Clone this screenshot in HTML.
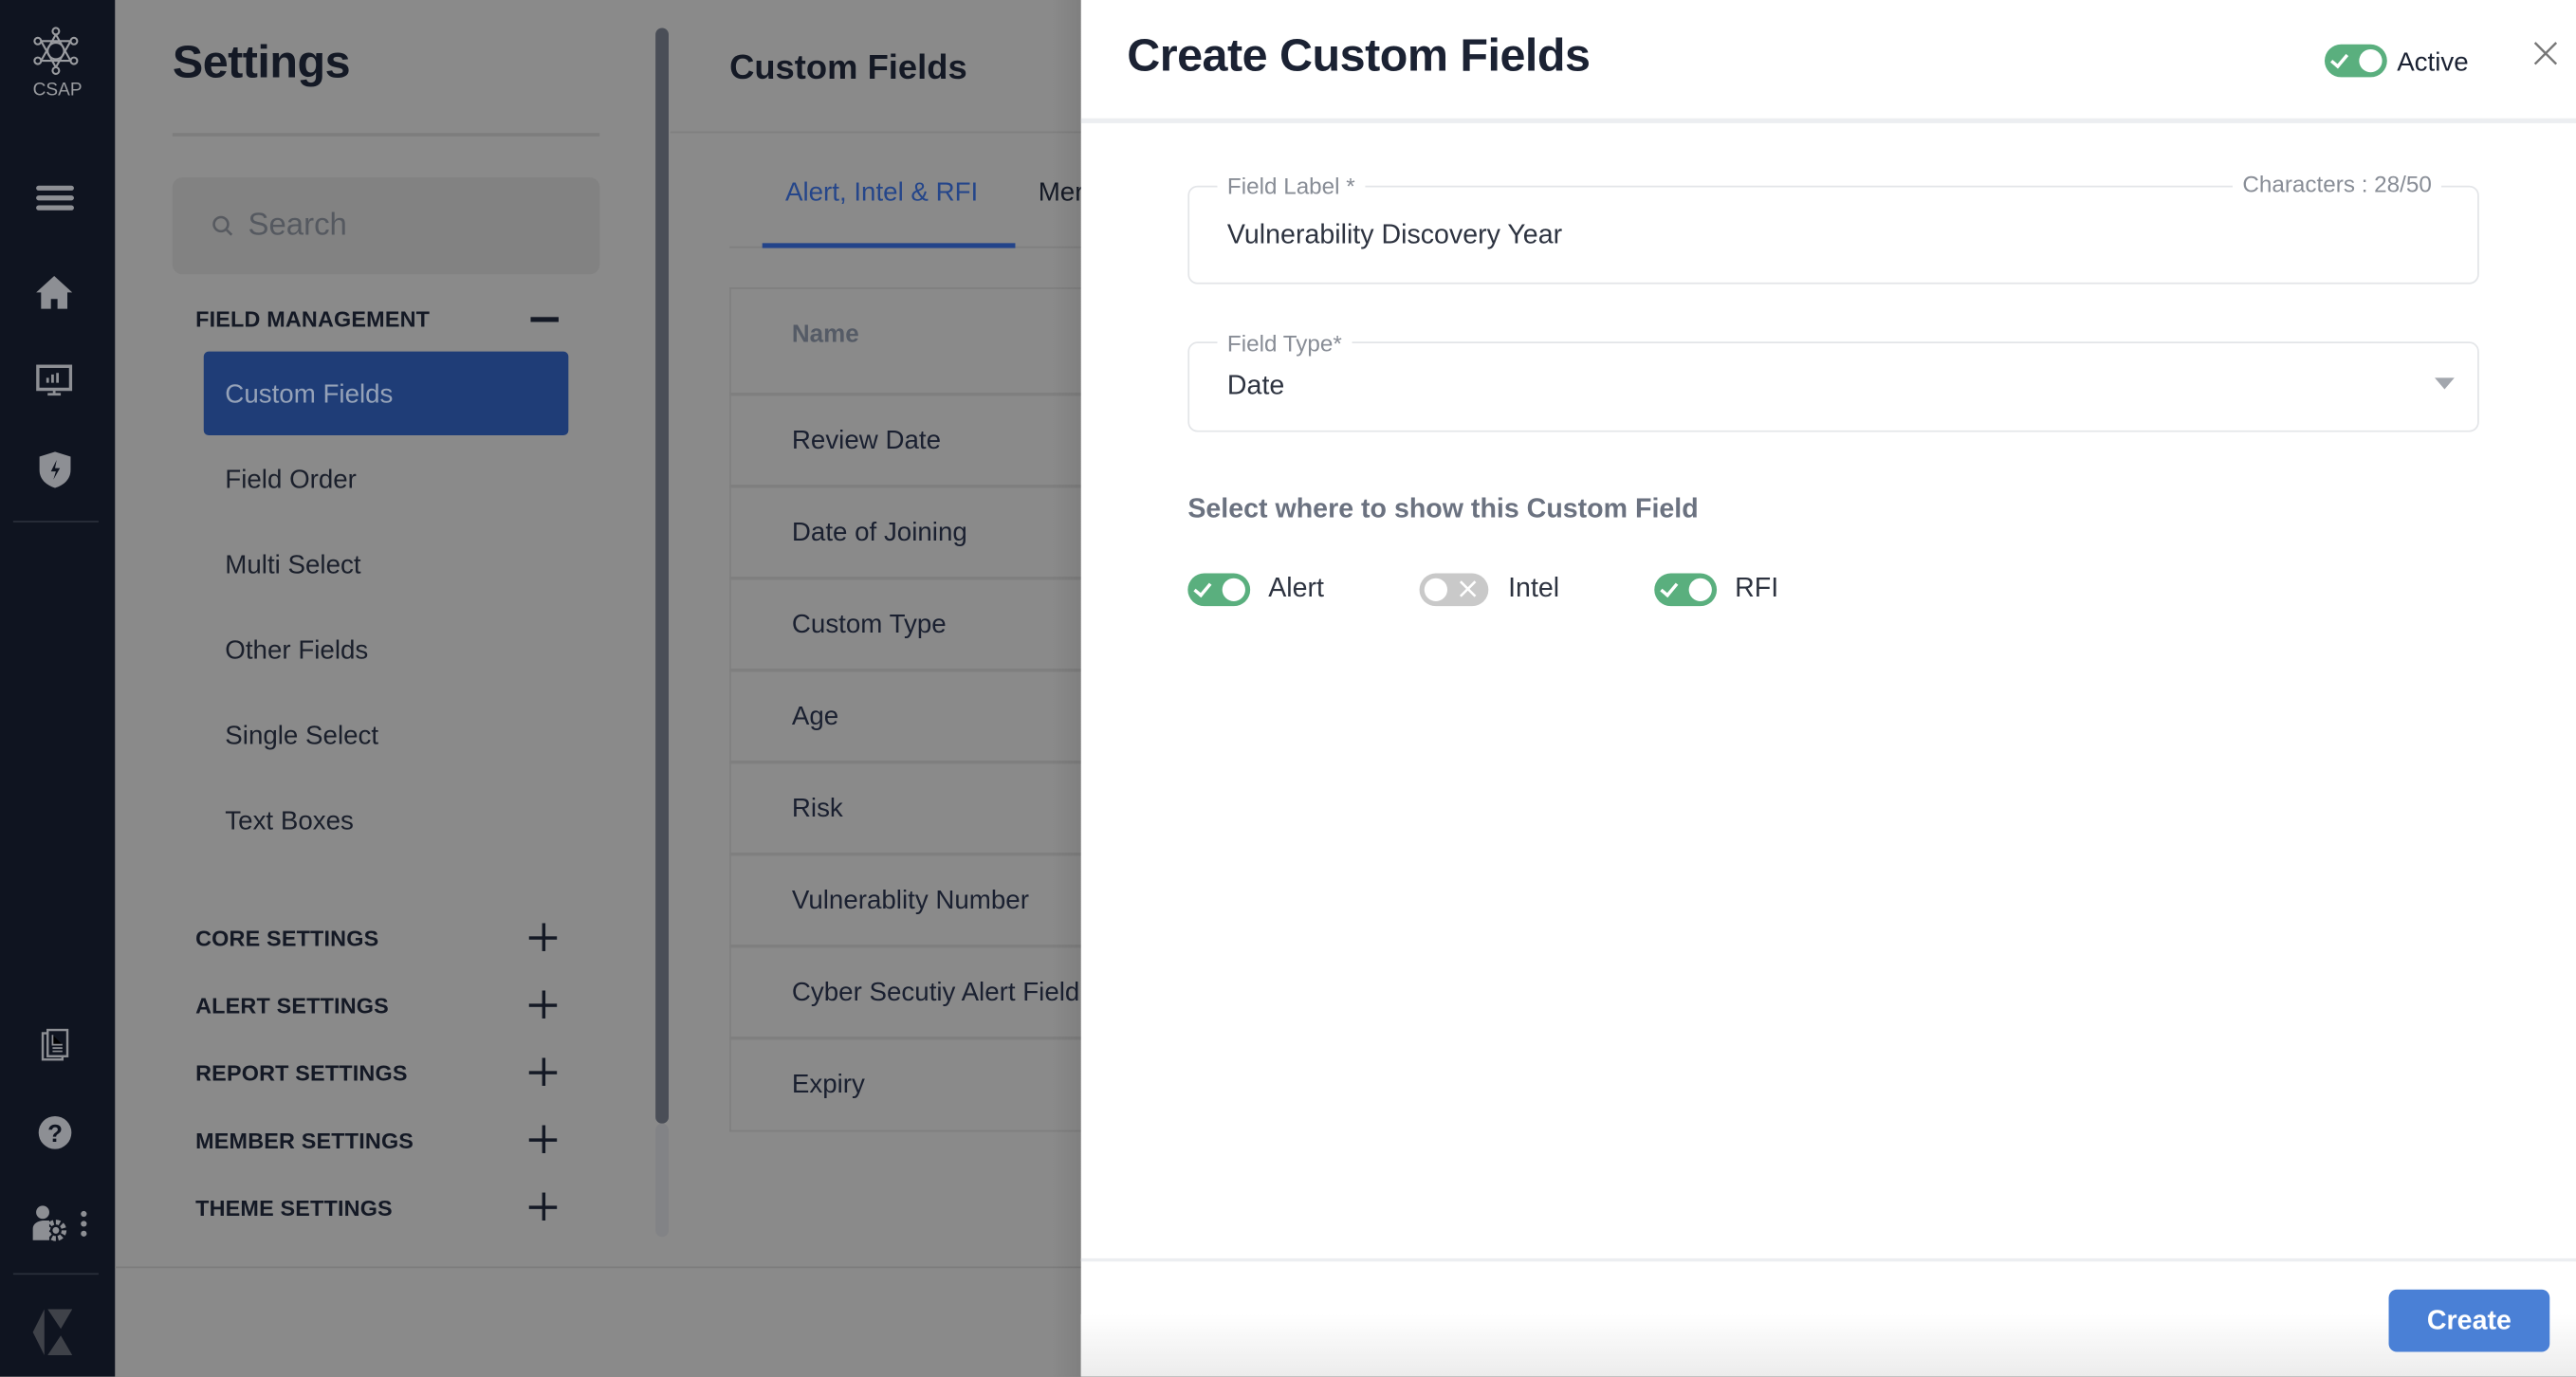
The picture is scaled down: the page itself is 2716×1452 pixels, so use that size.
<!DOCTYPE html>
<html><head><meta charset="utf-8"><style>
*{margin:0;padding:0;box-sizing:border-box}
html,body{width:2716px;height:1450px;overflow:hidden;background:#8a8a8a}
#w{position:absolute;left:0;top:0;width:1568px;height:837.2px;transform:scale(1.73214);transform-origin:0 0;font-family:"Liberation Sans",sans-serif;background:#8a8a8a}
.a{position:absolute;white-space:nowrap}
.side{left:0;top:0;width:70px;height:838px;background:#0f1420}
.ic{fill:#8d8f94}
.nav{font-size:16px;color:#1a1f2b;left:137px}
.sec{font-size:13.5px;font-weight:bold;color:#141925;left:119px;letter-spacing:.1px}
.plus{left:322px;width:18px;height:18px}
.plus:before{content:"";position:absolute;left:0;top:8px;width:17px;height:2px;background:#141925}
.plus:after{content:"";position:absolute;left:7.5px;top:0;width:2px;height:17px;background:#141925}
.row{left:482px;font-size:16px;color:#1a2030}
.sep{left:444px;width:214px;height:2px;background:#7f7f7f}
.tg{width:38px;height:20px;border-radius:10px;background:#5aaf7e}
.tg:after{content:"";position:absolute;right:3px;top:3px;width:14px;height:14px;border-radius:50%;background:#fff}
.tg i{position:absolute;left:6px;top:4px;width:6px;height:10px;border:solid #fff;border-width:0 2px 2px 0;transform:rotate(40deg)}
.off{background:#c9c9c9;width:42px}
.off:after{display:none}
.box{left:723px;width:786px;border:1.5px solid #e3e5e8;border-radius:6px}
.lab{font-size:14px;color:#888d96;background:#fff;padding:0 6px}
</style></head><body><div id="w">
<div class="a side"></div>
<svg class="a" style="left:19px;top:15px" width="30" height="32" viewBox="0 0 30 32"><g fill="none" stroke="#9a9ca0" stroke-width="1.2"><circle cx="15" cy="16" r="5"/><circle cx="15" cy="4" r="2"/><circle cx="15" cy="28" r="2"/><circle cx="4" cy="10" r="2"/><circle cx="26" cy="10" r="2"/><circle cx="4" cy="22" r="2"/><circle cx="26" cy="22" r="2"/><path d="M15 6L6 22M15 6L24 22M15 26L6 10M15 26L24 10M6 10H24M6 22H24"/></g></svg>
<div class="a" style="left:20px;top:49px;font-size:11px;color:#9a9ca0">CSAP</div>
<div class="a" style="left:22px;top:113px;width:23px;height:3px;border-radius:2px;background:#8d8f94;box-shadow:0 6px 0 #8d8f94,0 12px 0 #8d8f94"></div>
<svg class="a" style="left:22px;top:167px" width="22" height="22" viewBox="0 0 22 22"><path class="ic" d="M11 1L0 11h3v10h6v-6h4v6h6V11h3z"/></svg>
<svg class="a" style="left:22px;top:222px" width="22" height="20" viewBox="0 0 22 20"><rect x="1" y="1" width="20" height="14" fill="none" stroke="#8d8f94" stroke-width="2"/><path d="M7 11V8M10 11V6M13 11V5M11 15v3M7 18h8" stroke="#8d8f94" stroke-width="1.6"/></svg>
<svg class="a" style="left:24px;top:275px" width="19" height="22" viewBox="0 0 19 22"><path class="ic" d="M9.5 0L19 3v8c0 6-4.5 9.5-9.5 11C4.5 20.5 0 17 0 11V3z"/><path d="M10.5 5L7 12h3l-1.5 5 4-7h-3z" fill="#0f1420"/></svg>
<div class="a" style="left:8px;top:317px;width:52px;height:1px;background:#2a2f3a"></div>
<svg class="a" style="left:25px;top:626px" width="17" height="20" viewBox="0 0 17 20"><rect x="1" y="3" width="12" height="16" fill="none" stroke="#8d8f94" stroke-width="1.4"/><rect x="4" y="1" width="12" height="16" fill="#0f1420" stroke="#8d8f94" stroke-width="1.4"/><path d="M7 12h6M7 14h6M7 4v6h6" stroke="#8d8f94" stroke-width="1"/></svg>
<svg class="a" style="left:23px;top:679px" width="21" height="21" viewBox="0 0 21 21"><circle class="ic" cx="10.5" cy="10.5" r="10"/><text x="10.5" y="16" font-size="15" font-weight="bold" text-anchor="middle" fill="#0f1420" font-family="Liberation Sans">?</text></svg>
<svg class="a" style="left:19px;top:733px" width="38" height="24" viewBox="0 0 38 24"><circle class="ic" cx="7" cy="5" r="4"/><path class="ic" d="M1 22v-7c0-3 3-5 7-5h3v12z"/><circle cx="15" cy="16" r="5" fill="none" stroke="#8d8f94" stroke-width="3" stroke-dasharray="2.5 1.4"/><circle cx="15" cy="16" r="2" fill="#8d8f94"/><circle cx="32" cy="6" r="1.8" fill="#8d8f94"/><circle cx="32" cy="12" r="1.8" fill="#8d8f94"/><circle cx="32" cy="18" r="1.8" fill="#8d8f94"/></svg>
<div class="a" style="left:8px;top:775px;width:52px;height:1px;background:#2a2f3a"></div>
<svg class="a" style="left:19px;top:797px" width="28" height="28" viewBox="0 0 28 28"><path d="M8 0L1 14l7 14zM10 0h15l-7 12zM10 28h15l-7-12z" fill="#3f4249"/></svg>

<div class="a" style="left:105px;top:22px;font-size:28px;font-weight:bold;color:#141925;letter-spacing:-.3px">Settings</div>
<div class="a" style="left:105px;top:81px;width:260px;height:2px;background:#7d7d7d"></div>
<div class="a" style="left:105px;top:108px;width:260px;height:59px;border-radius:6px;background:#828282"></div>
<svg class="a" style="left:129px;top:131px" width="13" height="13" viewBox="0 0 13 13"><circle cx="5.5" cy="5.5" r="4.3" fill="none" stroke="#575a60" stroke-width="1.5"/><path d="M9 9l3 3" stroke="#575a60" stroke-width="1.5"/></svg>
<div class="a" style="left:151px;top:127px;font-size:19px;color:#555960">Search</div>
<div class="a sec" style="top:187px">FIELD MANAGEMENT</div>
<div class="a" style="left:323px;top:193px;width:17px;height:2.5px;background:#141925"></div>
<div class="a" style="left:124px;top:214px;width:222px;height:51px;border-radius:3px;background:#1f3d77"></div>
<div class="a nav" style="top:232px;color:#95a2b8">Custom Fields</div>
<div class="a nav" style="top:284px">Field Order</div>
<div class="a nav" style="top:336px">Multi Select</div>
<div class="a nav" style="top:388px">Other Fields</div>
<div class="a nav" style="top:440px">Single Select</div>
<div class="a nav" style="top:492px">Text Boxes</div>
<div class="a sec" style="top:564px">CORE SETTINGS</div><div class="a plus" style="top:562px"></div>
<div class="a sec" style="top:605px">ALERT SETTINGS</div><div class="a plus" style="top:603px"></div>
<div class="a sec" style="top:646px">REPORT SETTINGS</div><div class="a plus" style="top:644px"></div>
<div class="a sec" style="top:687px">MEMBER SETTINGS</div><div class="a plus" style="top:685px"></div>
<div class="a sec" style="top:728px">THEME SETTINGS</div><div class="a plus" style="top:726px"></div>
<div class="a" style="left:399px;top:17px;width:8px;height:667px;border-radius:4px;background:#4a4e57"></div>
<div class="a" style="left:399px;top:684px;width:8px;height:69px;border-radius:4px;background:#828386"></div>
<div class="a" style="left:70px;top:771px;width:588px;height:1px;background:#7d7d7d"></div>

<div class="a" style="left:444px;top:30px;font-size:21px;font-weight:bold;color:#141925">Custom Fields</div>
<div class="a" style="left:408px;top:80px;width:250px;height:1px;background:#7f7f7f"></div>
<div class="a" style="left:478px;top:109px;font-size:16px;color:#25468a">Alert, Intel &amp; RFI</div>
<div class="a" style="left:632px;top:109px;font-size:16px;color:#141925">Mer</div>
<div class="a" style="left:444px;top:150px;width:214px;height:1px;background:#7f7f7f"></div>
<div class="a" style="left:464px;top:148px;width:154px;height:3px;background:#23448a"></div>
<div class="a" style="left:444px;top:175px;width:214px;height:514px;border:1px solid #7f7f7f;border-right:0"></div>
<div class="a row" style="top:195px;font-weight:bold;color:#555b66;font-size:15px">Name</div>
<div class="a sep" style="top:239px"></div><div class="a row" style="top:260px">Review Date</div>
<div class="a sep" style="top:295px"></div><div class="a row" style="top:316px">Date of Joining</div>
<div class="a sep" style="top:351px"></div><div class="a row" style="top:372px">Custom Type</div>
<div class="a sep" style="top:407px"></div><div class="a row" style="top:428px">Age</div>
<div class="a sep" style="top:463px"></div><div class="a row" style="top:484px">Risk</div>
<div class="a sep" style="top:519px"></div><div class="a row" style="top:540px">Vulnerablity Number</div>
<div class="a sep" style="top:575px"></div><div class="a row" style="top:596px">Cyber Secutiy Alert Field</div>
<div class="a sep" style="top:631px"></div><div class="a row" style="top:652px">Expiry</div>
<div class="a" style="left:640px;top:0;width:18px;height:838px;background:linear-gradient(90deg,rgba(0,0,0,0),rgba(0,0,0,.08))"></div>

<div class="a" style="left:658px;top:0;width:910px;height:838px;background:#fff;overflow:hidden">
<div class="a" style="left:28px;top:18px;font-size:28px;font-weight:bold;color:#1b2233;letter-spacing:-.3px">Create Custom Fields</div>
<div class="a tg" style="left:757px;top:27px"><i></i></div>
<div class="a" style="left:801px;top:30px;font-size:16px;color:#1b2233">Active</div>
<svg class="a" style="left:884px;top:25px" width="15" height="15" viewBox="0 0 15 15"><path d="M1 1l13 13M14 1L1 14" stroke="#777" stroke-width="1.4"/></svg>
<div class="a" style="left:0;top:72px;width:910px;height:3px;background:#eceef1"></div>
</div>
<div class="a box" style="top:113px;height:60px"></div>
<div class="a lab" style="left:741px;top:105px">Field Label *</div>
<div class="a lab" style="left:1359px;top:104px">Characters : 28/50</div>
<div class="a" style="left:747px;top:134px;font-size:16.5px;color:#2d3340">Vulnerability Discovery Year</div>
<div class="a box" style="top:208px;height:55px"></div>
<div class="a lab" style="left:741px;top:201px">Field Type*</div>
<div class="a" style="left:747px;top:226px;font-size:16.5px;color:#2d3340">Date</div>
<div class="a" style="left:1482px;top:230px;width:0;height:0;border:6px solid transparent;border-top:7px solid #a3a7ae;border-bottom:0"></div>
<div class="a" style="left:723px;top:301px;font-size:16.5px;font-weight:bold;color:#6b7280">Select where to show this Custom Field</div>
<div class="a tg" style="left:723px;top:349px"><i></i></div>
<div class="a" style="left:772px;top:349px;font-size:16.5px;color:#2d3340">Alert</div>
<div class="a tg off" style="left:864px;top:349px"></div>
<div class="a" style="left:867px;top:352px;width:14px;height:14px;border-radius:50%;background:#fff"></div>
<svg class="a" style="left:888px;top:353px" width="11" height="11" viewBox="0 0 11 11"><path d="M1 1l9 9M10 1L1 10" stroke="#fff" stroke-width="1.5"/></svg>
<div class="a" style="left:918px;top:349px;font-size:16.5px;color:#2d3340">Intel</div>
<div class="a tg" style="left:1007px;top:349px"><i></i></div>
<div class="a" style="left:1056px;top:349px;font-size:16.5px;color:#2d3340">RFI</div>
<div class="a" style="left:658px;top:766px;width:910px;height:2px;background:#eceef1"></div>
<div class="a" style="left:658px;top:800px;width:910px;height:38px;background:linear-gradient(#fff,#ececec)"></div>
<div class="a" style="left:1454px;top:785px;width:98px;height:38px;border-radius:5px;background:#4a80d6;color:#fff;font-size:16.5px;font-weight:bold;text-align:center;line-height:38px">Create</div>
</div></body></html>
